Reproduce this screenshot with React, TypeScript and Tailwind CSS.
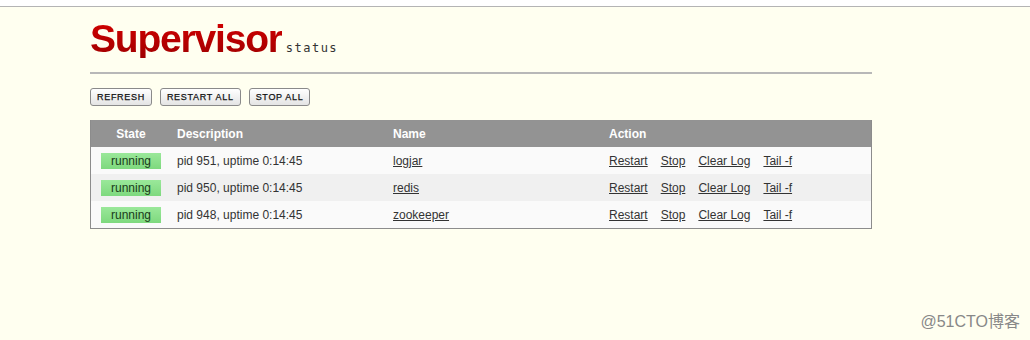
import React from "react";

interface Proc {
  pid: number;
  name: string;
}

const procs: Proc[] = [
  { pid: 951, name: "logjar" },
  { pid: 950, name: "redis" },
  { pid: 948, name: "zookeeper" },
];

const actions = ["Restart", "Stop", "Clear Log", "Tail -f"];

const Button: React.FC<{ label: string }> = ({ label }) => (
  <button className="h-[18px] px-[6px] rounded-[3px] border border-[#8a8a8a] bg-gradient-to-b from-white to-[#e4e4e4] text-[9px] leading-none tracking-[0.7px] text-[#111] font-['Liberation_Sans',Arial,sans-serif] [-webkit-text-stroke:0.25px_#111]">
    {label}
  </button>
);

export default function App() {
  return (
    <div className="min-h-[340px] bg-[#fffff0] font-['Liberation_Sans',Arial,sans-serif] text-[12px] text-[#333]">
      {/* browser strip */}
      <div className="h-[7px] bg-white border-b border-[#b4b4b4]" />

      <div className="w-[782px] ml-[90px]">
        {/* Header */}
        <div className="flex items-baseline h-[67px] pt-[12px] border-b-2 border-[#b8b8b8]">
          <span className="text-[39px] leading-none font-bold tracking-[-1.2px] text-transparent bg-clip-text bg-gradient-to-b from-[#d40000] to-[#a00000]">
            Supervisor
          </span>
          <span className="ml-[4px] text-[12px] leading-none tracking-[1.5px] text-[#333] font-['DejaVu_Sans_Mono',monospace]">
            status
          </span>
        </div>

        {/* Buttons */}
        <div className="flex gap-[8px] mt-[14px]">
          <Button label="REFRESH" />
          <Button label="RESTART ALL" />
          <Button label="STOP ALL" />
        </div>

        {/* Table */}
        <div className="mt-[14px] border border-[#8c8c8c] border-t-0">
          <div className="flex h-[27px] items-center bg-[#939393] text-white font-bold">
            <div className="w-[80px] text-center">State</div>
            <div className="w-[216px] pl-[6px]">Description</div>
            <div className="w-[216px] pl-[6px]">Name</div>
            <div className="pl-[6px]">Action</div>
          </div>
          {procs.map((p, i) => (
            <div
              key={p.pid}
              className={`flex h-[27px] items-center ${i % 2 === 1 ? "bg-[#f0f0f0]" : "bg-[#fafafa]"}`}
            >
              <div className="w-[80px] flex justify-center">
                <span className="w-[60px] h-[16px] leading-[16px] text-center bg-gradient-to-b from-[#9ae89a] to-[#7ed97e] text-[#1a3a1a]">
                  running
                </span>
              </div>
              <div className="w-[216px] pl-[6px]">pid {p.pid}, uptime 0:14:45</div>
              <div className="w-[216px] pl-[6px]">
                <a href="#" className="underline text-[#333]">{p.name}</a>
              </div>
              <div className="pl-[6px] flex gap-[13px]">
                {actions.map((a) => (
                  <a key={a} href="#" className="underline text-[#333]">
                    {a}
                  </a>
                ))}
              </div>
            </div>
          ))}
        </div>
      </div>

      {/* Watermark */}
      <div className="flex justify-end pr-[10px] mt-[81px] text-[16px] text-[#888] font-['Liberation_Sans','Noto_Sans_CJK_SC',sans-serif]">
        @51CTO博客
      </div>
    </div>
  );
}
